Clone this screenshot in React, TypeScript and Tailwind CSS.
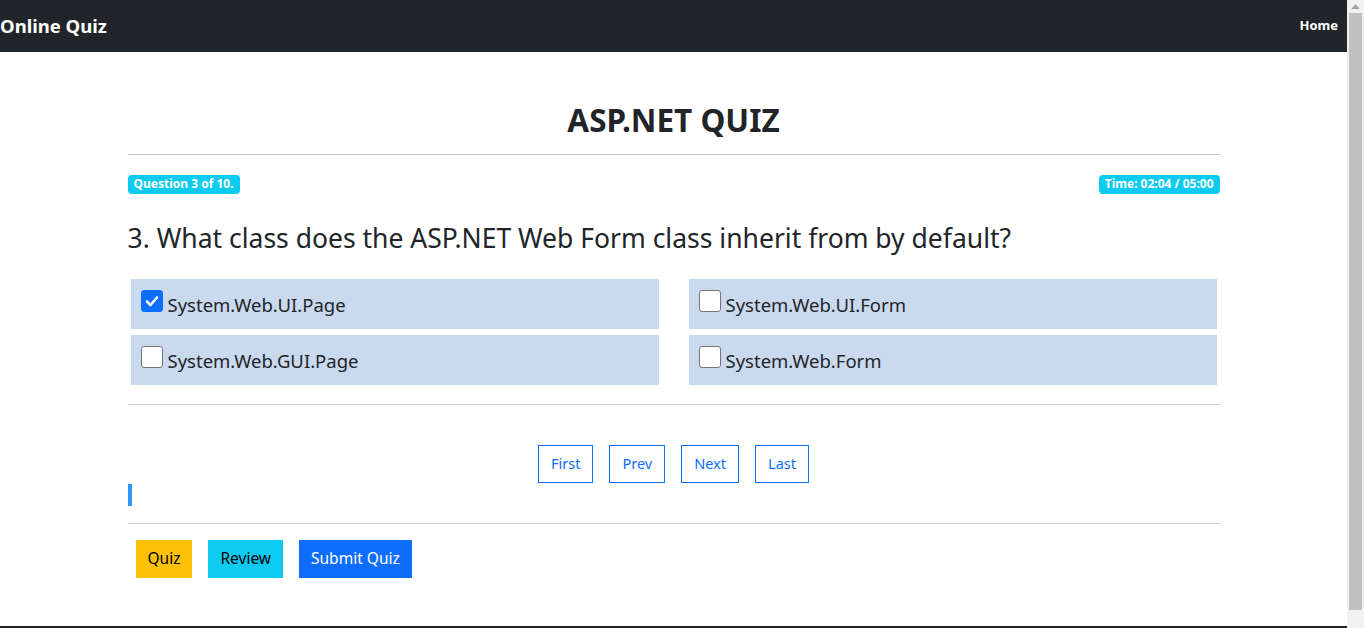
import { useState } from "react";

const options = [
  "System.Web.UI.Page",
  "System.Web.UI.Form",
  "System.Web.GUI.Page",
  "System.Web.Form",
];

export default function App() {
  const [checked, setChecked] = useState<string[]>(["System.Web.UI.Page"]);

  const toggle = (o: string) => {
    setChecked((c) => (c.includes(o) ? c.filter((x) => x !== o) : [...c, o]));
  };

  return (
    <div className="h-[628px] flex overflow-hidden bg-white text-[#212529] font-['Noto_Sans',sans-serif]">
      <div className="w-[1347px] flex flex-col shrink-0">
        {/* navbar */}
        <nav className="h-[52px] bg-[#212529] flex items-center justify-between shrink-0">
          <span className="text-white font-bold text-[18.5px] leading-none">Online Quiz</span>
          <a className="text-white font-bold text-[13px] mr-[9px]">Home</a>
        </nav>

        <main className="w-[1092px] mx-auto flex-1">
          <h1 className="text-center font-bold text-[31.5px] leading-none mt-[52px] mb-[18px]">ASP.NET QUIZ</h1>
          <hr className="border-0 border-t border-[#c8c9ca]" />

          <div className="flex justify-between mt-[20px]">
            <span className="bg-[#0dcaf0] text-white font-bold text-[12px] leading-none px-[6px] py-[3.5px] rounded-[4px]">
              Question 3 of 10.
            </span>
            <span className="bg-[#0dcaf0] text-white font-bold text-[12px] leading-none px-[6px] py-[3.5px] rounded-[4px]">
              Time: 02:04 / 05:00
            </span>
          </div>

          <h3 className="text-[26.5px] leading-tight mt-[28px]">
            3. What class does the ASP.NET Web Form class inherit from by default?
          </h3>

          <div className="grid grid-cols-2 gap-x-[30px] gap-y-[6px] px-[3px] mt-[24px]">
            {options.map((o) => {
              const on = checked.includes(o);
              return (
                <label
                  key={o}
                  onClick={() => toggle(o)}
                  className="h-[50px] bg-[#c9d9ee] flex items-center pl-[10px] cursor-pointer"
                >
                  <span
                    className={
                      "w-[22px] h-[22px] rounded-[3px] border flex items-center justify-center mr-[5px] -mt-[6px] " +
                      (on ? "bg-[#0d6efd] border-[#0d6efd]" : "bg-white border-[#767676]")
                    }
                  >
                    {on && (
                      <svg viewBox="0 0 16 16" className="w-[16px] h-[16px]">
                        <path d="M3 8.5 L6.5 12 L13 4.5" fill="none" stroke="white" strokeWidth="2.6" strokeLinecap="round" strokeLinejoin="round" />
                      </svg>
                    )}
                  </span>
                  <span className="text-[18.5px] mt-[2px]">{o}</span>
                </label>
              );
            })}
          </div>

          <hr className="border-0 border-t border-[#c8c9ca] mt-[19px]" />

          <div className="flex justify-center gap-[16px] mt-[40px] text-[14.5px] text-[#0d6efd]">
            {["First", "Prev", "Next", "Last"].map((b) => (
              <button key={b} className="h-[38px] px-[12px] border border-[#0d6efd]">
                {b}
              </button>
            ))}
          </div>

          <div className="w-[4px] h-[22px] bg-[#3399ff] mt-px"></div>

          <hr className="border-0 border-t border-[#c8c9ca] mt-[17px]" />

          <div className="flex gap-[16px] mt-[16px] ml-[8px] text-[15.5px]">
            <button className="h-[38px] px-[12px] bg-[#ffc107] text-black">Quiz</button>
            <button className="h-[38px] px-[12px] bg-[#0dcaf0] text-black">Review</button>
            <button className="h-[38px] px-[12px] bg-[#0d6efd] text-white">Submit Quiz</button>
          </div>
        </main>

        <footer className="h-[2px] bg-[#212529] shrink-0"></footer>
      </div>

      {/* scrollbar */}
      <div className="w-[17px] bg-[#f1f1f1] flex flex-col items-center shrink-0">
        <svg viewBox="0 0 10 6" className="w-[9px] h-[5px] mt-[4px]">
          <path d="M0 6 L5 0 L10 6 Z" fill="#a3a3a3" />
        </svg>
        <div className="w-[13px] h-[597px] bg-[#c1c1c1] mt-[4px]"></div>
      </div>
    </div>
  );
}
